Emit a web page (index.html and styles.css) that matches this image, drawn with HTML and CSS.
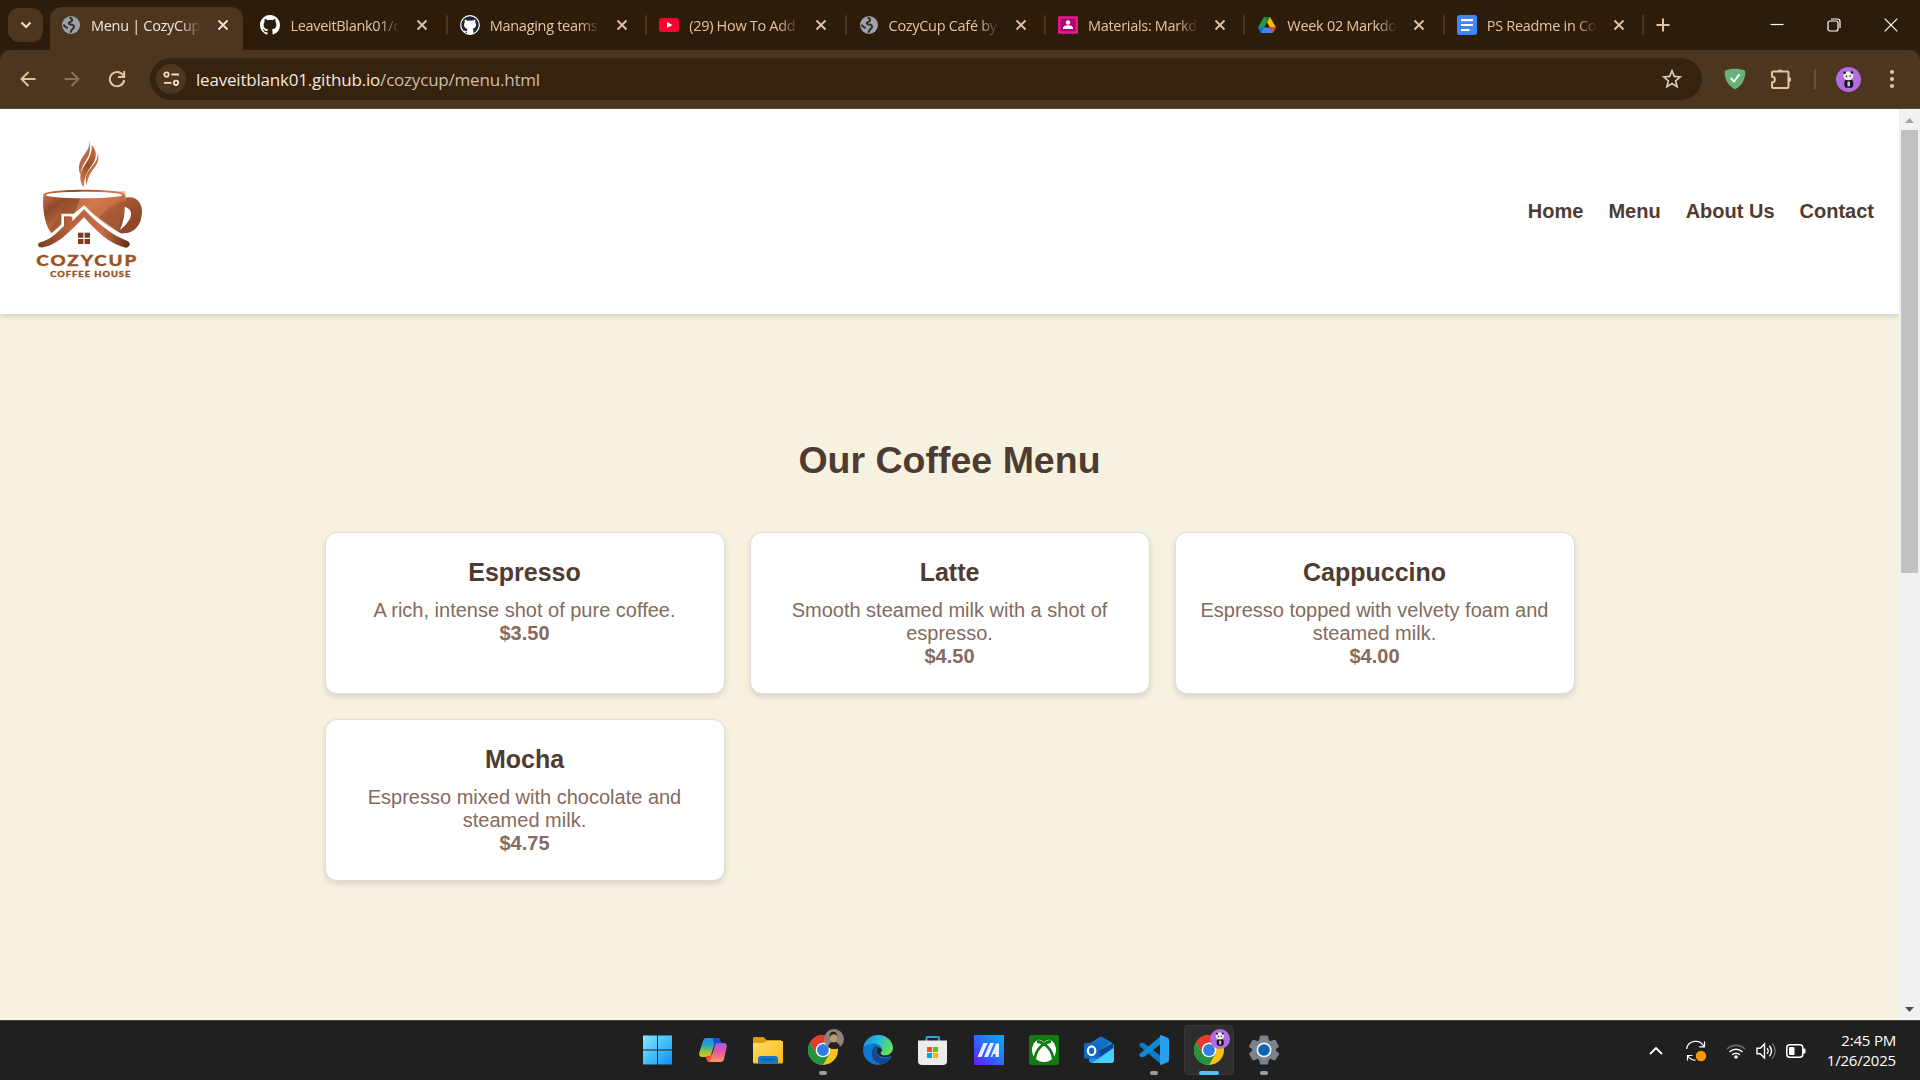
FILE: index.html
```html
<!DOCTYPE html>
<html lang="en">
<head>
<meta charset="utf-8">
<title>Menu | CozyCup</title>
<link rel="stylesheet" href="styles.css">
</head>
<body>
<svg class="defs" width="0" height="0">
  <defs>
    <symbol id="close" viewBox="0 0 12 12"><path d="M1.5 1.5l9 9M10.500 1.500l-9 9" fill="none" stroke="currentColor" stroke-width="1.8"/></symbol>
    <symbol id="globe" viewBox="0 0 20 20"><circle cx="10" cy="10" r="9" fill="#9aa3ab"/><path d="M8.500 2.500c2 .6 3 1.800 2.500 3.200-.5 1.200-2 1-2.800 1.800-.8.900-.2 1.800 1.300 1.900 2 .1 3.600.5 3.600 2.200 0 1.500-1.600 2-2.300 3.200-.5.900-.6 1.900-1.800 2.700M2.300 9.800l2.800 2.600 1.800.3" fill="none" stroke="#3b2b1b" stroke-width="2"/></symbol>
    <symbol id="chrome" viewBox="0 0 30 30"><circle cx="15" cy="15" r="15" fill="#fbc116"/><path d="M2 7.500A15 15 0 0 1 28 7.500H15L8.500 18.750z" fill="#e33b2e"/><path d="M2 7.500A15 15 0 0 0 15 30l6.500-11.250L15 21 8.500 18.750z" fill="#229342"/><circle cx="15" cy="15" r="7.300" fill="#fff"/><circle cx="15" cy="15" r="5.900" fill="#2f7de9"/></symbol>
    <symbol id="panda" viewBox="0 0 24 24"><circle cx="12" cy="12" r="12" fill="#b46ae0"/><rect x="8" y="12" width="8.500" height="8" rx="3" fill="#16141a"/><rect x="11" y="14" width="2.500" height="4.500" fill="#c8c8c8"/><ellipse cx="11.800" cy="8.500" rx="4.800" ry="4.200" fill="#eee"/><circle cx="8.300" cy="5.600" r="1.200" fill="#16141a"/><circle cx="15.200" cy="5.300" r="1.200" fill="#16141a"/><circle cx="10" cy="9" r=".8" fill="#16141a"/><circle cx="13.500" cy="8.600" r=".8" fill="#16141a"/></symbol>
  </defs>
</svg>

<header class="tabstrip">
  <button class="tab-search" aria-label="Search tabs"><svg width="12" height="8" viewBox="0 0 12 8"><path d="M1.500 1.500L6 6l4.500-4.500" fill="none" stroke="#f3dcc6" stroke-width="2"/></svg></button>
  <div class="tabs">
    <div class="tab active"><svg class="fav" viewBox="0 0 20 20"><use href="#globe"/></svg><span class="title">Menu | CozyCup Café</span><svg class="x"><use href="#close"/></svg></div>
    <div class="tab nosep"><svg class="fav" viewBox="0 0 16 16"><path fill="#fff" d="M8 0C3.580 0 0 3.580 0 8c0 3.540 2.290 6.530 5.470 7.590.4.070.55-.17.55-.38 0-.19-.01-.82-.01-1.490-2.010.37-2.530-.49-2.690-.94-.09-.23-.48-.94-.82-1.130-.28-.15-.68-.52-.01-.53.63-.01 1.080.58 1.230.82.72 1.210 1.870.87 2.330.66.07-.52.28-.87.51-1.070-1.780-.2-3.640-.89-3.640-3.950 0-.87.31-1.590.82-2.150-.08-.2-.36-1.020.08-2.120 0 0 .67-.21 2.200.82a7.600 7.600 0 0 1 4 0c1.530-1.040 2.200-.82 2.200-.82.44 1.100.16 1.920.08 2.120.51.560.82 1.270.82 2.150 0 3.070-1.870 3.750-3.650 3.950.29.25.54.73.54 1.480 0 1.070-.01 1.930-.01 2.200 0 .21.15.46.55.38A8 8 0 0 0 16 8c0-4.420-3.580-8-8-8z"/></svg><span class="title">LeaveitBlank01/cozycup</span><svg class="x"><use href="#close"/></svg></div>
    <div class="tab"><svg class="fav" viewBox="0 0 20 20"><circle cx="10" cy="10" r="9.300" fill="#1c2433" stroke="#fff" stroke-width="1.200"/><path fill="#fff" d="M5 4.500l2.800 1.300q2.200-.5 4.400 0L15 4.500q.7 1.500.3 3 1.200 1.500.7 3.500-.6 2.200-3.300 2.800.7.700.7 2v3.500H7v-2c-2 .3-2.800-.4-3.300-1.800l.6-.2c.7 1 1.400 1.200 2.700.9l.4-2.400C4.600 13.200 4 11 4 9.700q0-1.200.8-2.200-.5-1.500.2-3z"/></svg><span class="title">Managing teams in</span><svg class="x"><use href="#close"/></svg></div>
    <div class="tab"><svg class="fav" viewBox="0 0 20 20"><rect y="3" width="20" height="14" rx="3" fill="#ff0033"/><path d="M8 7l5.500 3L8 13z" fill="#fff"/></svg><span class="title">(29) How To Add a</span><svg class="x"><use href="#close"/></svg></div>
    <div class="tab"><svg class="fav" viewBox="0 0 20 20"><use href="#globe"/></svg><span class="title">CozyCup Café by Lea</span><svg class="x"><use href="#close"/></svg></div>
    <div class="tab"><svg class="fav" viewBox="0 0 20 20"><rect y="1.300" width="20" height="17.400" rx="1" fill="#e31c8d"/><rect x="2.500" y="3.800" width="15" height="12.400" fill="#b5006b"/><circle cx="10" cy="7.500" r="2.200" fill="#fff"/><path d="M5 14v-1c0-2 3-2.700 5-2.700s5 .7 5 2.700v1z" fill="#fff"/></svg><span class="title">Materials: Markdown</span><svg class="x"><use href="#close"/></svg></div>
    <div class="tab"><svg class="fav" viewBox="0 0 20 20"><path d="M7 2L1 12.500 4 18l6-10.500z" fill="#1a9f4c"/><path d="M7 2h6l6 10.500h-6z" fill="#fbbc04"/><path d="M7 2h6l-3 5.500z" fill="#188038"/><path d="M4 18l3-5.500H1z" fill="#1967d2"/><path d="M7 12.500h6L16 18H4z" fill="#4285f4"/><path d="M13 12.500h6L16 18z" fill="#ea4335"/></svg><span class="title">Week 02 Markdown</span><svg class="x"><use href="#close"/></svg></div>
    <div class="tab"><svg class="fav" viewBox="0 0 20 20"><rect width="20" height="20" rx="2.500" fill="#4285f4"/><path d="M4 5.200h12M4 10h12M4 15h8.500" stroke="#fff" stroke-width="2.200"/></svg><span class="title">PS Readme in Cozy</span><svg class="x"><use href="#close"/></svg></div>
    <button class="new-tab" aria-label="New tab"><svg width="14" height="14" viewBox="0 0 14 14"><path d="M7 .5v13M.5 7h13" stroke="#e6c3a0" stroke-width="2"/></svg></button>
  </div>
  <div class="window-buttons">
    <svg width="14" height="14" viewBox="0 0 14 14"><path d="M.5 6.500h13" stroke="#fff" stroke-width="1.200"/></svg>
    <svg width="14" height="14" viewBox="0 0 14 14"><rect x="1" y="3" width="10" height="10" rx="2" fill="none" stroke="#fff" stroke-width="1.200"/><path d="M4 1h6.500Q13 1 13 3.500V10" fill="none" stroke="#fff" stroke-width="1.200"/></svg>
    <svg width="14" height="14" viewBox="0 0 14 14"><path d="M.7.700l12.600 12.600M13.300.7L.7 13.300" stroke="#fff" stroke-width="1.200"/></svg>
  </div>
</header>

<div class="toolbar">
  <div class="nav-buttons">
    <svg width="16" height="16" viewBox="0 0 16 16"><path d="M15.500 8H2M8.500 1L1.500 8l7 7" fill="none" stroke="#e6c3a0" stroke-width="1.900"/></svg>
    <svg width="16" height="16" viewBox="0 0 16 16"><path d="M.5 8H14M7.500 1l7 7-7 7" fill="none" stroke="#8b7259" stroke-width="1.900"/></svg>
    <svg width="18" height="18" viewBox="0 0 18 18"><path d="M15.300 5.500A7.200 7.200 0 1 0 16.200 10" fill="none" stroke="#e6c3a0" stroke-width="2"/><path d="M16.200 1v6H10" fill="none" stroke="#e6c3a0" stroke-width="2"/></svg>
  </div>
  <div class="omnibox">
    <span class="site-info"><svg width="17" height="16" viewBox="0 0 17 16"><g fill="none" stroke="#f3dcc6" stroke-width="1.800"><circle cx="3.500" cy="3.500" r="2.200"/><path d="M8.500 3.500H16M1 11.800h7.500"/><circle cx="13" cy="11.800" r="2.200"/></g></svg></span>
    <span class="url">leaveitblank01.github.io<span class="path">/cozycup/menu.html</span></span>
    <svg class="star" width="20" height="20" viewBox="0 0 20 20"><path d="M10 1.800l2.300 5.600 6 .5-4.600 3.900 1.400 5.900L10 14.600l-5.100 3.100 1.400-5.900L1.700 7.900l6-.5z" fill="none" stroke="#dec9b8" stroke-width="1.700"/></svg>
  </div>
  <div class="extensions">
    <svg width="22" height="22" viewBox="0 0 22 22"><path d="M11 .8C14 .8 18 1.400 21.300 2.700 21.600 11 18.500 17.500 11 21.300 3.500 17.500.4 11 .7 2.700 4 1.400 8 .8 11 .8z" fill="#67b279"/><path d="M6.800 10l3.200 3.600 5.500-7.400" fill="none" stroke="#fff" stroke-width="1.900"/></svg>
    <svg class="puzzle" width="22" height="22" viewBox="0 0 22 22"><path d="M2 4.500q0-1 1-1h14.500q1 0 1 1V19q0 1-1 1H3q-1 0-1-1v-4.500c3.800-.3 3.800-5.700 0-6z" fill="none" stroke="#e6c3a0" stroke-width="2"/><path d="M7.500 4a2.600 2.600 0 0 1 5.200 0zM18.500 9a2.600 2.600 0 0 1 0 5.200z" fill="#e6c3a0"/></svg>
    <i class="divider"></i>
    <svg class="avatar" width="25" height="25" viewBox="0 0 24 24"><use href="#panda"/></svg>
    <svg width="6" height="20" viewBox="0 0 6 20"><g fill="#e6c3a0"><circle cx="3" cy="3" r="2.100"/><circle cx="3" cy="10" r="2.100"/><circle cx="3" cy="17" r="2.100"/></g></svg>
  </div>
</div>

<div class="viewport">
  <div class="page">
    <div class="site-header">
      <svg class="logo" viewBox="0 0 420 540" role="img" aria-label="CozyCup Coffee House">
        <defs>
          <linearGradient id="cup" x1="0" y1="0" x2="1" y2=".6"><stop offset="0" stop-color="#d97b50"/><stop offset=".2" stop-color="#9c5130"/><stop offset=".24" stop-color="#8f4a2b"/><stop offset=".5" stop-color="#c96f47"/><stop offset=".7" stop-color="#a85a36"/><stop offset="1" stop-color="#8a4526"/></linearGradient>
          <linearGradient id="roof" x1="0" x2="1"><stop offset="0" stop-color="#7b3d22"/><stop offset=".35" stop-color="#b5623d"/><stop offset=".7" stop-color="#c56d46"/><stop offset="1" stop-color="#602a14"/></linearGradient>
          <linearGradient id="steam" x1="0" y1="1" x2="1" y2="0"><stop offset="0" stop-color="#d97b50"/><stop offset=".5" stop-color="#964c2b"/><stop offset="1" stop-color="#cd744b"/></linearGradient>
        </defs>
        <path d="M206 60c10 35-29 45-29 86 0 7 2 12 5 18 0-30 24-44 27-70 2-12 1-24-3-34z" fill="#b96a45"/>
        <path d="M215 74c24 34-13 52-20 86-3 14-5 26-5 42-15-25-10-48 5-68 12-18 22-36 20-60z" fill="url(#steam)"/>
        <path d="M218 78c16 22 10 42-4 60-10 13-18 24-24 62-11-25-4-44 9-61 12-17 24-34 19-61z" fill="url(#steam)"/>
        <path d="M234 99c6 30-11 42-22 60-6 10-10 20-12 37-7-26 2-40 13-53 11-13 20-24 21-44z" fill="#b96a45"/>
        <path d="M70 224C70 204 314 204 314 224l3 9c34-7 50 18 49 44-2 37-28 68-66 62L192 262 98 345C76 320 66 272 70 224z" fill="url(#cup)"/>
        <path d="M145 214c-8 46-30 84-56 112l9 18 34-28v-30h28c12-20 22-45 18-72z" fill="#8f4728" opacity=".5"/>
        <path d="M180 214c2 26-6 46-18 68l30-20 42 38c22-36 62-50 84-58l-2-28z" fill="#dc8055" opacity=".55"/>
        <path d="M313 238c-40 14-66 38-80 62l64 38q2-40 16-64z" fill="#ad5d38" opacity=".55"/>
        <path d="M318 312c14-14 30-20 46-18-8 32-32 50-64 45z" fill="#8f4728"/>
        <ellipse cx="192" cy="225" rx="115" ry="10" fill="#fff"/>
        <path d="M314 260c29 9 26 38-14 70 10-25 15-48 14-70z" fill="#fff"/>
        <path d="M52 365c42-14 53-30 76-50v-30h30v4l34-28c35 39 80 73 140 99" fill="none" stroke="#fff" stroke-width="8"/>
        <path d="M57 370c28-8 50-26 76-53v-26h25v12l34-35c35 36 86 79 135 93v12H57z" fill="#fff"/>
        <path d="M60 367c27-6 47-25 72-49v-27h25v13l35-36c35 36 81 77 130 95 12 5 8 20-5 20-50-10-88-51-125-91-45 45-81 84-122 90-14 3-22-8-10-15z" fill="url(#roof)"/>
        <path d="M174 338h36v34h-36z" fill="#7b3b20"/><path d="M192 336v38M172 355h40" stroke="#fff" stroke-width="3.500"/>
        <text x="49" y="437" textLength="306" lengthAdjust="spacingAndGlyphs" font-size="46" letter-spacing="5" class="logo-name">COZYCUP</text>
        <text x="91" y="472" textLength="243" lengthAdjust="spacingAndGlyphs" font-size="24" letter-spacing="2.500" class="logo-name">COFFEE HOUSE</text>
      </svg>
      <nav class="site-nav"><a>Home</a><a>Menu</a><a>About Us</a><a>Contact</a></nav>
    </div>
    <main class="menu">
      <h1>Our Coffee Menu</h1>
      <div class="cards">
        <article class="card"><h2>Espresso</h2><p>A rich, intense shot of pure coffee.</p><strong>$3.50</strong></article>
        <article class="card"><h2>Latte</h2><p>Smooth steamed milk with a shot of espresso.</p><strong>$4.50</strong></article>
        <article class="card"><h2>Cappuccino</h2><p>Espresso topped with velvety foam and steamed milk.</p><strong>$4.00</strong></article>
        <article class="card"><h2>Mocha</h2><p>Espresso mixed with chocolate and steamed milk.</p><strong>$4.75</strong></article>
      </div>
    </main>
  </div>
  <div class="scrollbar">
    <svg width="9" height="5" viewBox="0 0 9 5"><path d="M0 5L4.500 0 9 5z" fill="#a3a3a3"/></svg>
    <div class="thumb"></div>
    <svg width="9" height="5" viewBox="0 0 9 5"><path d="M0 0h9L4.500 5z" fill="#505050"/></svg>
  </div>
</div>

<footer class="taskbar">
  <div class="apps">
    <div class="app"><svg viewBox="0 0 30 30"><defs><linearGradient id="win" x1="0" y1="0" x2="1" y2="1" gradientUnits="userSpaceOnUse" gradientTransform="scale(29)"><stop offset="0" stop-color="#7feeff"/><stop offset="1" stop-color="#0f8ff5"/></linearGradient></defs><path d="M0 0.500h14v14H0zM15 .5h14v14H15zM0 15.500h14v14H0zM15 15.500h14v14H15z" fill="url(#win)"/></svg></div>
    <div class="app"><svg viewBox="0 0 30 30"><defs><linearGradient id="cpa" x2="0" y2="1"><stop offset="0" stop-color="#1b8df0"/><stop offset=".4" stop-color="#27a9c0"/><stop offset=".7" stop-color="#8fc43c"/><stop offset="1" stop-color="#f0b818"/></linearGradient><linearGradient id="cpb" x2="0" y2="1"><stop offset="0" stop-color="#a455ea"/><stop offset=".5" stop-color="#ec5a9d"/><stop offset="1" stop-color="#fb9a68"/></linearGradient></defs><path d="M8 3h11c2 0 3 1.500 3.500 3.500L23 9h-4c-2 0-3 1-3.500 3L13 20c-.5 1.500-1.500 2-3 2H5c-3.500 0-4.500-2-3.500-5L5 6c.6-2 1.500-3 3-3z" fill="url(#cpa)"/><path d="M15 3h4c2 0 3 1.500 3.500 3.500L23 9h-4c-1.300 0-2 .4-2.700 1.300z" fill="#1f49cf"/><path d="M23 27H12c-2 0-3-1.500-3.500-3.500L8 21h3c2 0 3-1 3.500-3L17 10c.5-1.500 1.500-2 3-2h5c3.500 0 4.500 2 3.500 5L26 24c-.6 2-1.500 3-3 3z" fill="url(#cpb)"/><path d="M12 27c-2 0-3-1.500-3.500-3.500L8 21h3c1.500 0 2.600-.7 3.200-2L12.500 25z" fill="#ef533a"/></svg></div>
    <div class="app"><svg viewBox="0 0 30 30"><defs><linearGradient id="fo" x2="1" y2="1"><stop offset="0" stop-color="#ffdc6a"/><stop offset="1" stop-color="#fcb914"/></linearGradient></defs><path d="M0 3.500Q0 2 1.500 2h8.300q1 0 2 1.200L13.500 5H28v5H0z" fill="#dd9b07"/><path d="M0 9q0-1 1-1h9.500q1 0 1.800-1l1.400-1H29q1 0 1 1v20q0 1.500-1.500 1.500h-27Q0 28.500 0 27z" fill="url(#fo)"/><path d="M5 28.500V24q0-3 3-3h14q3 0 3 3v4.500z" fill="#1379cb"/><path d="M8.500 24.500h13" stroke="#085395" stroke-width="1.200"/></svg></div>
    <div class="app"><svg viewBox="0 0 30 30"><use href="#chrome"/></svg><svg class="profile" viewBox="0 0 20 20"><circle cx="10" cy="10" r="10" fill="#8c837a"/><path d="M4 18c1-4 3-5 6-5s5 1 6 5a10 10 0 0 1-12 0z" fill="#25211f"/><ellipse cx="9.500" cy="8.500" rx="3.500" ry="5" fill="#c29679"/><path d="M5.500 8c-.5-7 8-7 8 0l-1.500-2.500H8z" fill="#28201d"/></svg><i class="dot"></i></div>
    <div class="app"><svg viewBox="0 0 30 30"><defs><linearGradient id="ed" x2="1" y2=".4"><stop offset="0" stop-color="#1387da"/><stop offset=".5" stop-color="#27b9de"/><stop offset="1" stop-color="#65df55"/></linearGradient></defs><circle cx="15" cy="15" r="15" fill="#1177cf"/><path d="M.5 12C2 4.500 8 0 15 0c9 0 15 6.500 15 13 0 5-4 7.500-8 7.500-3.500 0-4.500-1.500-4.500-2.500S19 16.500 19 14.500C19 11 15 8.500 11 8.500c-5 0-9 2-10.500 3.500z" fill="url(#ed)"/><path d="M12 11c-7 7-2 18 8 18 4-1.500 6.500-4 8-7-6 3-14 1-14.500-5 0-2 .4-3.500 1.800-5z" fill="#114a8c"/><path d="M15.500 12c-2 2.300-2.500 5.800.5 8.200 3 2.500 8 2.500 11.800 1 .8-.2 1 .5.700 1L30 20V15c-2 4.500-5.500 5.500-8 5.500-3.500 0-4.500-1.500-4.500-2.500S19 16.500 19 14.500z" fill="#202020"/></svg></div>
    <div class="app"><svg viewBox="0 0 30 30"><path d="M8.500 7V2.500Q8.500 2 9 2h11.500q.5 0 .5.500V7" fill="none" stroke="#23a8dd" stroke-width="2"/><path d="M0 5.500h29V26q0 4-4 4H4q-4 0-4-4z" fill="#ececec"/><path d="M9 12h5v5H9z" fill="#f25022"/><path d="M15 12h5v5h-5z" fill="#7fba00"/><path d="M9 18h5v5H9z" fill="#00a4ef"/><path d="M15 18h5v5h-5z" fill="#ffb900"/></svg></div>
    <div class="app"><svg viewBox="0 0 30 30"><defs><linearGradient id="ma" x1="0" y1="1" x2="1" y2="0"><stop offset="0" stop-color="#6518ff"/><stop offset=".5" stop-color="#2a6dff"/><stop offset="1" stop-color="#08aeff"/></linearGradient></defs><path d="M0 0h30v30H0z" fill="url(#ma)"/><path d="M3.500 22L9.500 8h4L7.500 22zM10 22l6-14h4l-6 14zM16.500 22l5.500-13.500 3 0V22h-3.500v-3h-2.200l-1 3z" fill="#e5f0ff"/></svg></div>
    <div class="app"><svg viewBox="0 0 30 30"><rect width="30" height="30" rx="2.500" fill="#107c10"/><circle cx="15" cy="15" r="12" fill="#fff"/><path d="M7.500 4.500c3-.5 5.500 1 7.500 2.500 2-1.500 4.500-3 7.500-2.500C18-1 12-1 7.500 4.500z" fill="#107c10"/><path d="M15 8.500C9.500 13 6 18 6 23.500M15 8.500C20.500 13 24 18 24 23.500M8 6.500c3 0 5 1 7 3 2-2 4-3 7-3" fill="none" stroke="#107c10" stroke-width="2.800"/></svg></div>
    <div class="app"><svg viewBox="0 0 30 30"><path d="M5 9L16 2q1-.6 2 0l11 6.500q1 .5 1 2V25q0 3-3 3H8q-3 0-3-3z" fill="#2491df"/><path d="M7 8l10-6 10 5-12 9z" fill="#1470c2"/><path d="M13 17L29 8v5L16 22z" fill="#07449b"/><path d="M8 28l22-15v12q0 3-3 3z" fill="#45cff5"/><rect y="8" width="15.500" height="15.500" rx="1.500" fill="#1068c3"/><ellipse cx="7.600" cy="15.700" rx="3.700" ry="4.400" fill="none" stroke="#fff" stroke-width="2.200"/></svg></div>
    <div class="app"><svg viewBox="0 0 30 30"><path d="M0 10l2-2.300 3 .2L23 22v8L1 11.500z" fill="#0e7bc2"/><path d="M0 20l2 2.300 3-.2L23 8V0L1 18.500z" fill="#118bd2"/><path d="M22 0l7 3q1 .5 1 1.500v21q0 1-1 1.500l-7 3q-1.500-.5-1-2V2Q20.500.5 22 0z" fill="#27a0f1"/></svg><i class="dot"></i></div>
    <div class="app selected"><svg viewBox="0 0 30 30"><use href="#chrome"/></svg><svg class="profile" viewBox="0 0 24 24"><use href="#panda"/></svg><i class="dot"></i></div>
    <div class="app"><svg viewBox="0 0 30 30"><path d="M11.500 1h7l1 4.500 2 1L26 5l3.500 6.500L26.500 14v2l3.500 2.500L26 25l-4.500-1.500-2 1-1 4.500h-7l-1-4.500-2-1L4 25 .3 18.500 3.500 16v-2L.3 11.500 4 5l4.500 1.500 2-1z" fill="#7b838c" stroke="#7b838c"/><circle cx="15" cy="15" r="7.500" fill="#f2f2f2"/><circle cx="15" cy="15" r="5.800" fill="#0b63b2"/></svg><i class="dot"></i></div>
  </div>
  <div class="tray">
    <svg class="chev" width="14" height="9" viewBox="0 0 14 9"><path d="M1 8l6-6 6 6" fill="none" stroke="#fff" stroke-width="1.800"/></svg>
    <svg class="sync" width="22" height="22" viewBox="0 0 22 22"><path d="M1.500 9A9.300 9.300 0 0 1 19 6.500M19.500 1.500v5.300h-5.300M2.500 20.500v-5h5M2.500 15.500c2 3 4.500 4.700 8 4.700" fill="none" stroke="#fff" stroke-width="1.200"/><circle cx="16" cy="16" r="5.200" fill="#ff9800"/></svg>
    <svg class="wifi" width="20" height="16" viewBox="0 0 20 16"><g fill="none" stroke="#fff" stroke-width="1.600"><path d="M.8 6.200a13 13 0 0 1 18.400 0" stroke="#666"/><path d="M3.500 9a9.200 9.200 0 0 1 13 0M6.200 11.800a5.400 5.400 0 0 1 7.600 0"/></g><circle cx="10" cy="14" r="1.800" fill="#fff"/></svg>
    <svg class="vol" width="20" height="18" viewBox="0 0 20 18"><g fill="none" stroke="#fff" stroke-width="1.400"><path d="M1 6.200h3.200L8.500 2v14l-4.300-4.200H1z"/><path d="M11 6.200a4 4 0 0 1 0 5.600M13.300 3.700a7.500 7.500 0 0 1 0 10.600"/><path d="M16 1.500a10.500 10.500 0 0 1 0 15" stroke="#666"/></g></svg>
    <svg width="20" height="14" viewBox="0 0 20 14"><rect x=".8" y=".8" width="16" height="12.400" rx="3" fill="none" stroke="#fff" stroke-width="1.500"/><rect x="3" y="3" width="5.500" height="8" rx="1" fill="#fff"/><path d="M17 4.500h1.500q1 0 1 1v3q0 1-1 1H17z" fill="#fff"/></svg>
    <div class="clock"><span>2:45 PM</span><span>1/26/2025</span></div>
  </div>
</footer>
</body>
</html>
```
FILE: styles.css
```css
* { box-sizing: border-box; }

body {
  margin: 0;
  width: 1920px;
  height: 1080px;
  overflow: hidden;
  display: flex;
  flex-direction: column;
  background: #2d1c0a;
  font-family: "Open Sans", "Noto Sans", sans-serif;
}

svg { display: block; flex: none; }
.defs { position: absolute; }
button { border: 0; padding: 0; background: none; }

/* Tab strip */
.tabstrip {
  height: 50px;
  flex: none;
  display: flex;
  padding-left: 8px;
}

.tab-search {
  width: 35px;
  height: 34px;
  margin-top: 8px;
  border-radius: 11px;
  background: #4c3620;
  display: grid;
  place-items: center;
}

.tabs { display: flex; padding-left: 4px; }

.tab {
  width: 199.4px;
  height: 50px;
  padding-left: 12px;
  display: flex;
  align-items: center;
  position: relative;
  color: #e6c3a0;
}

.tab::before {
  content: "";
  width: 2px;
  height: 20px;
  margin: 0 0 0 -12px;
  background: #4c3620;
  border-radius: 1px;
}

.tab .fav { width: 20px; height: 20px; margin-left: 12px; }

.tab.nosep::before, .tab.active::before { background: none; }

.tab.active { color: #f6e4d4; }

.tab.active::after {
  content: "";
  position: absolute;
  z-index: -1;
  left: 3px;
  top: 7px;
  width: 193px;
  height: 43px;
  border-radius: 12px 12px 0 0;
  background: #4c3620;
}

.title {
  width: 110px;
  margin-left: 10px;
  padding-top: 1px;
  overflow: hidden;
  white-space: nowrap;
  font-size: 14.500px;
  letter-spacing: -0.3px;
  line-height: 24px;
  -webkit-mask-image: linear-gradient(90deg, #000 82%, transparent);
  mask-image: linear-gradient(90deg, #000 82%, transparent);
}

.x { width: 12px; height: 12px; margin-left: 16px; }

.new-tab {
  width: 40px;
  display: flex;
  align-items: center;
  gap: 12px;
}

.new-tab::before {
  content: "";
  width: 2px;
  height: 20px;
  background: #4c3620;
}

.window-buttons {
  margin-left: auto;
  margin-right: 22px;
  display: flex;
  align-items: center;
  gap: 43px;
}

/* Toolbar */
.toolbar {
  height: 59px;
  flex: none;
  display: flex;
  align-items: center;
  background: #4c3620;
  border-radius: 10px 10px 0 0;
  border-bottom: 1px solid #5d4a40;
}

.nav-buttons {
  width: 150px;
  padding-left: 20px;
  display: flex;
  align-items: center;
  gap: 28px;
}

.omnibox {
  width: 1552px;
  height: 42px;
  padding: 0 20px 0 6px;
  display: flex;
  align-items: center;
  background: #35220f;
  border-radius: 21px;
}

.site-info {
  width: 30px;
  height: 30px;
  border-radius: 50%;
  background: #4c3620;
  display: grid;
  place-items: center;
}

.url {
  margin-left: 10px;
  font-size: 17px;
  letter-spacing: -0.2px;
  color: #f8e7d7;
}

.path { color: #cfbcab; }
.star { margin-left: auto; }

.extensions {
  flex: 1;
  padding: 0 25px 0 22px;
  display: flex;
  align-items: center;
}

.puzzle { margin-left: 24px; }
.divider { width: 2px; height: 20px; margin: 0 20px 0 22px; background: #6b5035; }
.avatar { margin-right: auto; }

/* Web page */
.viewport { height: 911px; flex: none; display: flex; }

.page {
  width: 1899px;
  background: #f7f1df;
  font: 20px/23px "Liberation Sans", Arial, sans-serif;
}

.site-header {
  height: 205px;
  padding: 0 25px 0 20px;
  display: flex;
  align-items: center;
  justify-content: space-between;
  background: #fff;
  box-shadow: 0 2px 6px rgba(0, 0, 0, .14);
}

.logo { width: 140px; height: 180px; margin-bottom: 3px; }

.logo-name {
  font-family: Lato, sans-serif;
  font-weight: 900;
  fill: #985521;
  stroke: #985521;
  stroke-width: 1px;
}

.site-nav {
  display: flex;
  gap: 25px;
  font-weight: bold;
  color: #4e3b31;
}

.menu {
  width: 1250px;
  margin: 0 auto;
  padding-top: 125px;
  text-align: center;
}

h1 {
  margin: 0 0 50px;
  font-size: 37.500px;
  line-height: 43px;
  color: #4e3b31;
}

.cards {
  display: grid;
  grid-template-columns: repeat(3, 1fr);
  gap: 25px;
}

.card {
  height: 162px;
  padding: 25px 20px;
  background: #fff;
  border: 1px solid #ddd;
  border-radius: 12px;
  box-shadow: 0 3px 6px rgba(0, 0, 0, .12);
  color: #856a5d;
}

.card h2 {
  margin: 0 0 13px;
  font-size: 25px;
  line-height: 28px;
  color: #4e3b31;
}

.card p { margin: 0; }
.card strong { display: block; }

.scrollbar {
  width: 21px;
  padding: 9px 0 8px;
  display: flex;
  flex-direction: column;
  align-items: center;
  background: #f1f1f1;
}

.thumb {
  width: 17px;
  height: 443px;
  margin: 7px 0 auto;
  background: #c1c1c1;
}

/* Taskbar */
.taskbar {
  height: 60px;
  display: flex;
  justify-content: space-between;
  background: #202020;
  border-top: 1px solid #444;
}

.apps {
  padding: 4px 0 0 633px;
  display: flex;
  gap: 5.100px;
}

.app {
  width: 50px;
  height: 50px;
  padding: 10px;
  position: relative;
  border-radius: 5px;
}

.app svg { width: 30px; height: 30px; }

.app.selected {
  background: #2d2d2d;
  box-shadow: inset 0 0 0 1px #383838;
}

.app .profile {
  position: absolute;
  left: 26px;
  top: 4px;
  width: 20px;
  height: 20px;
}

.dot {
  position: absolute;
  left: 21px;
  bottom: 0;
  width: 8px;
  height: 4px;
  border-radius: 2px;
  background: #9b9b9b;
}

.selected .dot { left: 15px; width: 20px; background: #4cc2ff; }

.tray {
  padding-right: 24px;
  display: flex;
  align-items: center;
}

.sync { margin-left: 22px; }
.wifi { margin-left: 19px; }
.vol { margin: 0 10px; }

.clock {
  width: 90px;
  display: flex;
  flex-direction: column;
  align-items: flex-end;
  font-size: 15px;
  letter-spacing: -0.2px;
  line-height: 20px;
  padding-bottom: 2px;
  color: #fff;
}
```
